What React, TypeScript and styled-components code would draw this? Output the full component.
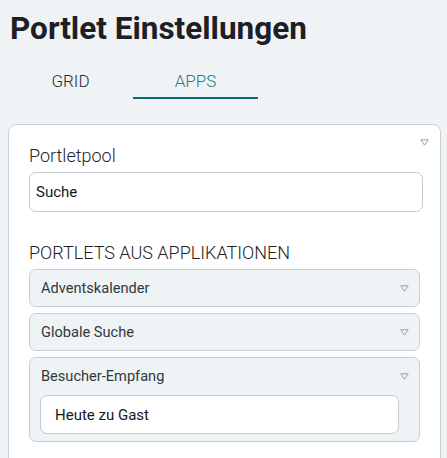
import React from 'react';
import styled, { createGlobalStyle } from 'styled-components';

const GlobalStyle = createGlobalStyle`
    html, body {
        margin: 0;
        padding: 0;
        background: #eff3f6;
        font-family: Roboto, "Noto Sans", sans-serif;
        color: #1f2326;
        overflow: hidden;
    }
`;

const Page = styled.div`
    padding: 0 6px 0 8px;
`;

const Title = styled.h1`
    margin: 0;
    padding: 11px 0 0 2px;
    font-size: 31.5px;
    font-weight: 700;
    line-height: 36px;
    color: #1c2024;
`;

const Tabs = styled.div`
    display: flex;
    padding-top: 24px;
`;

const Tab = styled.div<{ $active?: boolean }>`
    width: 125px;
    text-align: center;
    font-size: 17px;
    font-weight: 300;
    line-height: 20px;
    padding-bottom: 6px;
    color: ${p => (p.$active ? '#237c86' : '#2a2e31')};
    border-bottom: 2px solid ${p => (p.$active ? '#0b6a74' : 'transparent')};
`;

const Card = styled.div`
    position: relative;
    margin-top: 25px;
    background: #fff;
    border: 1px solid #c9d0d4;
    border-radius: 8px;
    padding: 20px 17px 40px 20px;
    height: 400px;
`;

const Caret = styled.span`
    position: absolute;
    top: 14px;
    right: 11px;
    display: flex;
`;

const Label = styled.div<{ $upper?: boolean }>`
    font-size: 18px;
    font-weight: 300;
    color: #1f2326;
    line-height: 22px;
    margin-bottom: 5px;
    text-transform: ${p => (p.$upper ? 'uppercase' : 'none')};
`;

const TextField = styled.div`
    height: 40px;
    box-sizing: border-box;
    border: 1px solid #c4cbd0;
    border-radius: 7px;
    background: #fff;
    padding: 0 14px 0 6px;
    display: flex;
    align-items: center;
    font-size: 15px;
    color: #15191c;
    margin-bottom: 30px;
`;

const List = styled.div`
    display: flex;
    flex-direction: column;
    gap: 6px;
    margin-right: 3px;
`;

const Item = styled.div`
    background: #eef3f6;
    border: 1px solid #c6cdd2;
    border-radius: 7px;
`;

const ItemHead = styled.div`
    display: flex;
    align-items: center;
    justify-content: space-between;
    height: 36px;
    padding: 0 10px 0 11px;
    font-size: 14.6px;
    color: #33383c;
`;

const ItemBody = styled.div`
    padding: 1px 20px 7px 10px;
`;

const InnerField = styled(TextField)`
    height: 39px;
    margin-bottom: 0;
    padding-left: 14px;
`;

const Tri = () => (
    <svg width="9" height="7" viewBox="0 0 9 7">
        <path d="M0.8 0.8 H8.2 L4.5 6.2 Z" fill="none" stroke="#9aa1a6" strokeWidth="1" />
    </svg>
);

interface PortletProps {
    name: string;
    children?: React.ReactNode;
}

const Portlet: React.FC<PortletProps> = ({ name, children }) => (
    <Item>
        <ItemHead>
            <span>{name}</span>
            <Tri />
        </ItemHead>
        {children && <ItemBody>{children}</ItemBody>}
    </Item>
);

export default function App() {
    return (
        <Page>
            <GlobalStyle />
            <Title>Portlet Einstellungen</Title>
            <Tabs>
                <Tab>GRID</Tab>
                <Tab $active>APPS</Tab>
            </Tabs>
            <Card>
                <Caret><Tri /></Caret>
                <Label>Portletpool</Label>
                <TextField>Suche</TextField>
                <Label $upper>Portlets aus Applikationen</Label>
                <List>
                    <Portlet name="Adventskalender" />
                    <Portlet name="Globale Suche" />
                    <Portlet name="Besucher-Empfang">
                        <InnerField>Heute zu Gast</InnerField>
                    </Portlet>
                </List>
            </Card>
        </Page>
    );
}
